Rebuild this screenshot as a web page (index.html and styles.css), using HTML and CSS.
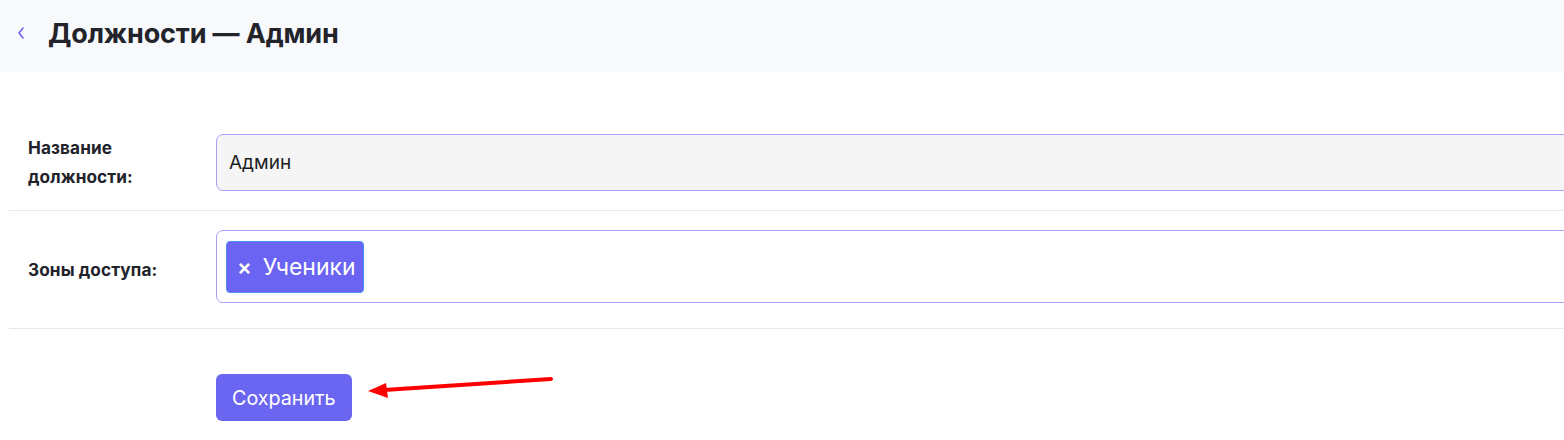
FILE: index.html
```html
<!DOCTYPE html>
<html lang="ru">
<head>
<meta charset="utf-8">
<link rel="stylesheet" href="styles.css">
</head>
<body>
<header class="topbar">
  <span class="back">
    <svg width="10" height="14" viewBox="0 0 10 14"><path d="M7 2 L3 7 L7 12" fill="none" stroke="#6f63f2" stroke-width="1.6" stroke-linecap="round" stroke-linejoin="round"/></svg>
  </span>
  <h1 class="title">Должности — Админ</h1>
</header>
<main class="form">
  <div class="row row-name">
    <label class="label">Название<br>должности:</label>
    <div class="field field-text">Админ</div>
  </div>
  <div class="row row-zones">
    <label class="label label-zones">Зоны доступа:</label>
    <div class="field field-tags">
      <span class="tag"><span class="tag-x">×</span>Ученики</span>
    </div>
  </div>
  <div class="actions">
    <button class="btn">Сохранить</button>
  </div>
  <svg class="arrow" width="200" height="30" viewBox="0 0 200 30">
    <path d="M185 6 L18 17" stroke="#ff0000" stroke-width="4" stroke-linecap="round" fill="none"/>
    <path d="M2 18 L20 10 L22 25 Z" fill="#ff0000"/>
  </svg>
</main>
</body>
</html>
```
FILE: styles.css
```css
html, body {
  margin: 0;
  padding: 0;
  background: #ffffff;
  overflow: hidden;
}
body {
  font-family: Inter, "Noto Sans", sans-serif;
  color: #22232a;
  width: 1564px;
}
.topbar {
  height: 72px;
  background: #f8f9fb;
  display: flex;
  align-items: center;
  padding-left: 16px;
  box-sizing: border-box;
}
.back {
  display: flex;
  width: 14px;
  height: 14px;
  align-items: center;
  margin-right: 18px;
  margin-top: -6px;
}
.title {
  margin: 0;
  font-size: 27px;
  font-weight: 700;
  letter-spacing: -0.15px;
  margin-top: -5px;
  color: #23242b;
}
.form {
  position: relative;
  margin-left: 9px;
  padding-top: 41px;
  width: 1800px;
}
.row {
  display: flex;
  align-items: center;
  border-bottom: 1px solid #e8e8ea;
}
.row-name {
  padding: 20px 0 19px;
}
.row-zones {
  padding: 19px 0 25px;
}
.label {
  width: 207px;
  box-sizing: border-box;
  padding-left: 19px;
  font-size: 17.2px;
  font-weight: 700;
  letter-spacing: 0.1px;
  line-height: 29px;
  color: #22232a;
}
.label-zones {
  margin-top: 6px;
}
.field {
  width: 1500px;
  box-sizing: border-box;
  border: 1px solid #a89ff6;
  border-radius: 7px;
}
.field-text {
  height: 57px;
  background: #f5f5f6;
  display: flex;
  align-items: center;
  padding-left: 12px;
  font-size: 19px;
  color: #1d1d22;
}
.field-tags {
  height: 73px;
  background: #fff;
  display: flex;
  align-items: center;
  padding-left: 9px;
}
.tag {
  height: 52px;
  box-sizing: border-box;
  background: #6b63f2;
  border: 1px solid #4d8ff0;
  border-radius: 4px;
  display: flex;
  align-items: center;
  padding: 0 7px 0 10px;
  color: #fff;
  font-size: 23px;
  font-weight: 400;
}
.tag-x {
  font-size: 22px;
  margin-right: 11px;
  font-weight: 600;
}
.actions {
  padding: 45px 0 0 207px;
}
.btn {
  height: 47px;
  padding: 0 16px;
  background: #6b66f1;
  border: none;
  border-radius: 6px;
  color: #fff;
  font-family: Inter, "Noto Sans", sans-serif;
  font-size: 19.7px;
  font-weight: 400;
}
.arrow {
  position: absolute;
  left: 357px;
  top: 301px;
}
```
